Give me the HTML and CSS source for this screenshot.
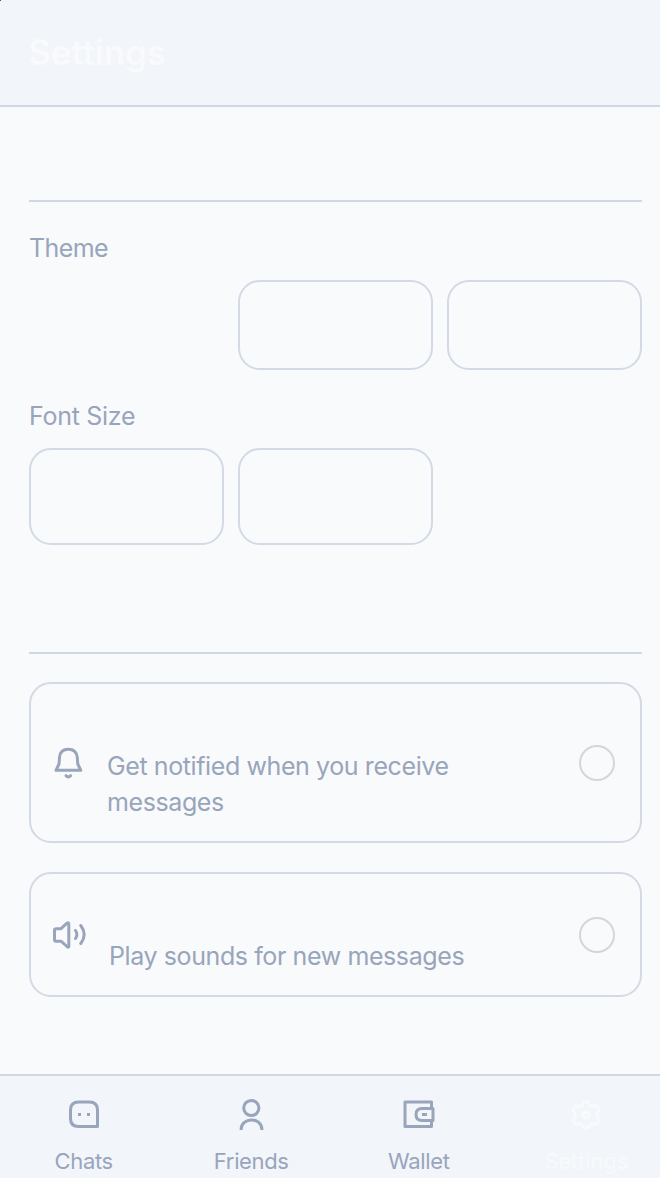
FILE: index.html
```html
<!DOCTYPE html>
<html lang="en">
<head>
<meta charset="utf-8">
<title>Settings</title>
<link rel="stylesheet" href="styles.css">
</head>
<body>
<div class="screen">
  <header class="header"><h1 class="title">Settings</h1></header>
  <main class="content">
    <section class="section appearance">
      <h2 class="label theme-label">Theme</h2>
      <div class="options theme-options">
        <span class="option selected"></span><span class="option"></span><span class="option"></span>
      </div>
      <h2 class="label size-label">Font Size</h2>
      <div class="options size-options">
        <span class="option"></span><span class="option"></span><span class="option selected"></span>
      </div>
    </section>
    <section class="section notifications">
      <div class="card card-messages">
        <svg class="icon bell" viewBox="0 0 40 40">
          <path d="M8 27.300H32.800L29.800 21L29.300 14.500C28.800 9 25.500 6.300 20.300 6.300S11.900 9 11.500 14.500L11 21Z"/>
          <path d="M18 32.700Q20.300 35 22.600 32.700"/>
        </svg>
        <p class="description">Get notified when you receive<br>messages</p>
        <span class="radio"></span>
      </div>
      <div class="card card-sounds">
        <svg class="icon speaker" viewBox="0 0 40 40">
          <path d="M6.500 15.500Q6.500 13.700 8.300 13.700H13L19 8.200Q20.800 7 20.800 9V31Q20.800 33 19 31.500L13 26.200H8.300Q6.500 26.200 6.500 24.400Z"/>
          <path d="M27.500 15.500Q30.300 19.500 27.500 23.500M32.800 10.500Q39.600 19.500 32.800 28.500"/>
        </svg>
        <p class="description">Play sounds for new messages</p>
        <span class="radio"></span>
      </div>
    </section>
  </main>
  <nav class="tabs">
    <a class="tab">
      <svg class="icon" viewBox="0 0 40 40"><path d="M14.500 8H25.500Q33.500 8 33.500 16V32.500H14.500Q6.500 32.500 6.500 24.500V16Q6.500 8 14.500 8Z"/><path d="M14 20.500H17M23 20.500H26"/></svg>
      <span class="tab-name">Chats</span>
    </a>
    <a class="tab">
      <svg class="icon" viewBox="0 0 40 40"><circle cx="20.300" cy="14" r="7.600"/><path d="M10 36C10 22.500 31 22.500 31 36"/></svg>
      <span class="tab-name">Friends</span>
    </a>
    <a class="tab">
      <svg class="icon" viewBox="0 0 40 40"><path d="M32.500 14.500V8H6V32.500H32.500V26.500M34 14.500H23Q17 14.500 17 20.500T23 26.500H34ZM23 20.500H28"/></svg>
      <span class="tab-name">Wallet</span>
    </a>
    <a class="tab active">
      <svg class="icon" viewBox="0 0 40 40"><path d="M17.500 8H22.500Q23.500 12.800 27.500 12.300Q31 10.500 33 15.800Q30.500 18.500 31 21Q30.500 23.500 33 26.200Q31 31.500 27.500 29.700Q23.500 29.200 22.500 34H17.500Q16.500 29.200 12.500 29.700Q9 31.500 7 26.200Q9.500 23.500 9 21Q9.500 18.500 7 15.800Q9 10.500 12.500 12.300Q16.500 12.800 17.500 8Z"/><circle cx="20" cy="21" r="3"/></svg>
      <span class="tab-name">Settings</span>
    </a>
  </nav>
  <span class="corner"></span>
</div>
</body>
</html>
```
FILE: styles.css
```css
* { box-sizing: border-box; }
body { margin: 0; background: #f9fafc; color: #98a5bb; font-family: Inter, "Liberation Sans", sans-serif; }
h1, h2, p { margin: 0; font-weight: 400; }
.screen { position: relative; width: 660px; height: 1178px; overflow: hidden; display: flex; flex-direction: column; }
.header { flex: none; height: 107px; padding: 30px 28px 0; background: #f2f5fa; border-bottom: 2px solid #ced7e2; }
.title { font-size: 35px; line-height: 44px; font-weight: 600; color: #f9fafc; letter-spacing: -0.1px; }
.content { flex: 1; padding: 93px 18px 0 29px; }
.section { border-top: 2px solid #d0d9e3; }
.label { font-size: 25px; line-height: 36px; height: 36px; white-space: nowrap; letter-spacing: -0.3px; }
.theme-label { letter-spacing: -0.6px; }
.appearance { height: 452px; padding-top: 28px; }
.options { display: grid; grid-template-columns: repeat(3, 195px); gap: 14px; }
.theme-options { margin-top: 14px; height: 90px; }
.size-label { margin-top: 28px; }
.size-options { margin-top: 14px; height: 97px; }
.option { border: 2px solid #d2dae5; border-radius: 22px; }
.selected { border-color: transparent; }
.notifications { padding-top: 28px; }
.card { display: flex; align-items: center; border: 2px solid #d2dae5; border-radius: 22px; padding: 0 25px 0 17px; }
.card-messages { height: 161px; }
.card-sounds { height: 125px; margin-top: 29px; }
.icon { display: block; flex: none; width: 40px; height: 40px; fill: none; stroke: #98a5bb; stroke-width: 3; stroke-linejoin: round; stroke-linecap: butt; }
.bell, .speaker { stroke-linecap: round; }
.description { flex: 1; font-size: 25px; line-height: 36px; white-space: nowrap; letter-spacing: -0.4px; }
.card-messages .description { padding: 43px 0 0 19px; }
.card-sounds .description { padding: 43px 0 0 21px; }
.radio { flex: none; width: 36px; height: 36px; border: 2px solid #d4d6dd; border-radius: 50%; }
.tabs { flex: none; height: 104px; display: grid; grid-template-columns: repeat(4, 167.5px); background: #f2f5fa; border-top: 2px solid #d0d9e3; }
.tab { display: flex; flex-direction: column; align-items: center; padding-top: 18px; }
.tab-name { font-size: 22px; line-height: 30px; margin-top: 12px; white-space: nowrap; letter-spacing: -0.35px; }
.active { color: #f8fafc; }
.active .icon { stroke: #f8fafc; }
.active .tab-name { letter-spacing: 0; }
.corner { position: absolute; left: 0; top: 0; width: 1px; height: 1px; background: #55536d; }
```
